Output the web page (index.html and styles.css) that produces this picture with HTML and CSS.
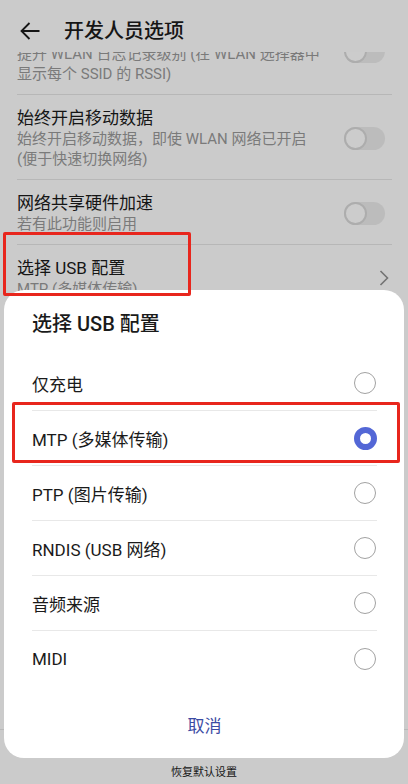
FILE: index.html
```html
<!DOCTYPE html>
<html lang="zh-CN">

<head>
    <meta charset="UTF-8">
    <meta name="viewport" content="width=device-width, initial-scale=1.0">
    <title>开发人员选项</title>
    <link rel="stylesheet" href="styles.css">
</head>

<body>
    <div class="screen">
        <div class="topbar">
            <svg class="back" width="20" height="18" viewBox="0 0 20 18">
                <path d="M9.5 1 L1.5 9 L9.5 17 M1.5 9 H19.5" fill="none" stroke="#1a1a1a" stroke-width="1.8" />
            </svg>
            <h1>开发人员选项</h1>
        </div>

        <div class="settings">
            <div class="setting first">
                <div class="setting-text">
                    <div class="setting-sub">提升 WLAN 日志记录级别 (在 WLAN 选择器中<br>显示每个 SSID 的 RSSI)</div>
                </div>
                <span class="switch"></span>
            </div>
            <div class="setting">
                <div class="setting-text">
                    <div class="setting-title">始终开启移动数据</div>
                    <div class="setting-sub">始终开启移动数据，即使 WLAN 网络已开启<br>(便于快速切换网络)</div>
                </div>
                <span class="switch"></span>
            </div>
            <div class="setting">
                <div class="setting-text">
                    <div class="setting-title">网络共享硬件加速</div>
                    <div class="setting-sub">若有此功能则启用</div>
                </div>
                <span class="switch"></span>
            </div>
            <div class="setting">
                <div class="setting-text">
                    <div class="setting-title">选择 USB 配置</div>
                    <div class="setting-sub">MTP (多媒体传输)</div>
                </div>
                <svg class="chevron" width="10" height="16" viewBox="0 0 10 16">
                    <path d="M1.5 1 L8.5 8 L1.5 15" fill="none" stroke="#8a8a8a" stroke-width="1.6" />
                </svg>
            </div>
        </div>

        <div class="toolbar">
            <svg class="reset-icon" width="20" height="20" viewBox="0 0 20 20">
                <path d="M4 6 A7.5 7.5 0 1 0 10 2.5 M10 2.5 L7 0.5 M10 2.5 L7.5 5" fill="none" stroke="#1a1a1a" stroke-width="1.8" />
            </svg>
            <span class="toolbar-label">恢复默认设置</span>
        </div>

        <div class="scrim"></div>

        <div class="sheet">
            <div class="sheet-title">选择 USB 配置</div>
            <div class="option">
                <span>仅充电</span>
                <span class="radio"></span>
            </div>
            <div class="option">
                <span>MTP (多媒体传输)</span>
                <span class="radio checked"></span>
            </div>
            <div class="option">
                <span>PTP (图片传输)</span>
                <span class="radio"></span>
            </div>
            <div class="option">
                <span>RNDIS (USB 网络)</span>
                <span class="radio"></span>
            </div>
            <div class="option">
                <span>音频来源</span>
                <span class="radio"></span>
            </div>
            <div class="option last">
                <span>MIDI</span>
                <span class="radio"></span>
            </div>
            <div class="sheet-cancel">取消</div>
        </div>

        <div class="mark mark-usb"></div>
        <div class="mark mark-mtp"></div>
    </div>
</body>

</html>
```

FILE: styles.css
```css
body {
    font-family: Roboto, "Noto Sans CJK SC", sans-serif;
    margin: 0;
    padding: 0;
    background-color: #f3f3f3;
    color: #1a1a1a;
}

.screen {
    position: relative;
    width: 408px;
    height: 784px;
    overflow: hidden;
    display: flex;
    flex-direction: column;
    background-color: #f3f3f3;
}

/* top bar */

.topbar {
    height: 52px;
    box-sizing: border-box;
    padding: 10px 0 0 20px;
    display: flex;
    align-items: center;
    background-color: #f3f3f3;
    flex-shrink: 0;
}

.topbar h1 {
    margin: 0 0 0 24px;
    font-size: 20px;
    font-weight: 500;
    line-height: 26px;
    color: #1a1a1a;
}

/* settings list */

.settings {
    flex: 1;
    overflow: hidden;
}

.setting {
    display: flex;
    align-items: center;
    margin: 0 16px 0 17px;
    padding: 12px 0 10px 0;
    border-bottom: 1px solid #dcdcdc;
}

/* row scrolled up under the top bar */
.setting.first {
    margin-top: -20px;
}

.setting.first .switch {
    align-self: flex-start;
    margin-top: -4px;
}

.setting-text {
    flex: 1;
}

.setting-title {
    font-size: 17px;
    line-height: 22px;
    color: #1a1a1a;
}

.setting-sub {
    font-size: 15px;
    line-height: 20px;
    color: #939393;
}

.switch {
    position: relative;
    width: 41px;
    height: 23px;
    margin-right: 7px;
    border-radius: 12px;
    background-color: #e2e2e2;
    flex-shrink: 0;
}

.switch::before {
    content: "";
    position: absolute;
    left: 0;
    top: 0;
    width: 19px;
    height: 19px;
    border: 2px solid #cfcfcf;
    border-radius: 50%;
    background-color: #f5f5f5;
}

.chevron {
    margin-right: 3px;
    flex-shrink: 0;
}

/* bottom toolbar */

.toolbar {
    height: 55px;
    box-sizing: border-box;
    padding-top: 8px;
    border-top: 1px solid #dedede;
    display: flex;
    flex-direction: column;
    align-items: center;
    flex-shrink: 0;
}

.toolbar-label {
    margin-top: 8px;
    font-size: 11px;
    line-height: 14px;
    color: #1a1a1a;
}

/* dialog */

.scrim {
    position: absolute;
    left: 0;
    top: 0;
    right: 0;
    bottom: 0;
    background-color: rgba(0, 0, 0, 0.165);
}

.sheet {
    position: absolute;
    left: 4px;
    top: 290px;
    width: 400px;
    box-sizing: border-box;
    padding: 0 27px 10px 28px;
    background-color: #ffffff;
    border-radius: 20px;
}

.sheet-title {
    padding: 21px 0 19px 0;
    font-size: 20px;
    font-weight: 500;
    line-height: 26px;
    color: #1a1a1a;
}

.option {
    height: 55px;
    box-sizing: border-box;
    display: flex;
    align-items: center;
    justify-content: space-between;
    border-bottom: 1px solid #e8e8e8;
    font-size: 17px;
    color: #1a1a1a;
}

.option.last {
    border-bottom: none;
}

.radio {
    width: 22px;
    height: 22px;
    box-sizing: border-box;
    margin-right: 1px;
    border: 1.5px solid #a2a2a2;
    border-radius: 50%;
}

.radio.checked {
    width: 23px;
    height: 23px;
    margin-right: 0;
    border: 6.5px solid #5367d6;
}

.sheet-cancel {
    margin-top: 18px;
    height: 44px;
    line-height: 44px;
    text-align: center;
    font-size: 17px;
    color: #3b4ba3;
}

/* red highlight frames */

.mark {
    position: absolute;
    box-sizing: border-box;
    border: 3px solid #e8261d;
    border-radius: 2px;
}

.mark-usb {
    left: 3px;
    top: 232px;
    width: 188px;
    height: 64px;
}

.mark-mtp {
    left: 12px;
    top: 402px;
    width: 388px;
    height: 61px;
}
```
